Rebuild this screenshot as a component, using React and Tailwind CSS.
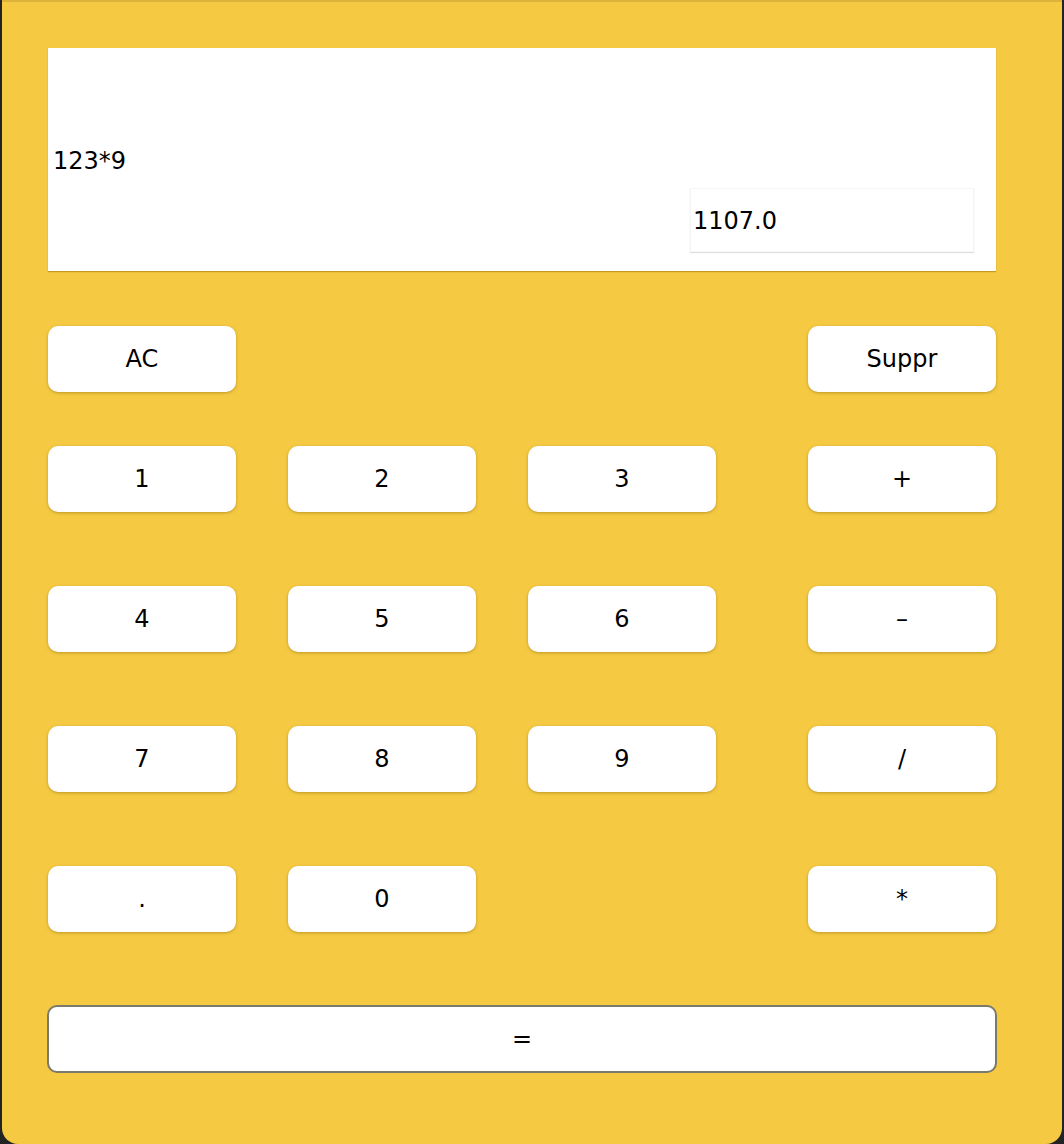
import React from "react";

const Btn = ({ children, className = "" }) => (
  <button
    className={`h-[66px] w-[188px] rounded-[10px] bg-white text-[24px] text-black shadow-[0_1px_3px_rgba(120,90,0,0.45)] flex items-center justify-center ${className}`}
    style={{ fontFamily: '"DejaVu Sans", "Noto Sans", sans-serif' }}
  >
    {children}
  </button>
);

export default function App() {
  const rows = [
    ["1", "2", "3", "+"],
    ["4", "5", "6", "–"],
    ["7", "8", "9", "/"],
    [".", "0", null, "*"],
  ];
  return (
    <div className="w-[1064px] h-[1144px] bg-[#232323] overflow-hidden" style={{ fontFamily: '"DejaVu Sans", "Noto Sans", sans-serif' }}>
      <div className="ml-[2px] w-[1060px] h-[1144px] bg-[#f5c942] border-t-2 border-[#dcb23a] rounded-b-[16px] pt-[46px] pl-[46px]">
        <div className="w-[948px] h-[223px] bg-white shadow-[0_1px_1px_rgba(170,120,0,0.6)] flex flex-col">
          <div className="h-[140px] flex items-end pl-[5px] pb-[15px] text-[24px] text-black leading-none">123*9</div>
          <div className="flex justify-end pr-[22px]">
            <div className="w-[284px] h-[64px] bg-white border border-[#f5f5f5] shadow-[0_1px_1px_rgba(0,0,0,0.12)] flex items-center pl-[2px] pt-[2px] text-[24px] text-black">
              1107.0
            </div>
          </div>
        </div>

        <div className="mt-[55px] w-[948px] flex justify-between">
          <Btn>AC</Btn>
          <Btn>Suppr</Btn>
        </div>

        <div className="mt-[54px] w-[948px] grid grid-cols-[188px_188px_188px_1fr] gap-x-[52px] gap-y-[74px]">
          {rows.map((r, i) =>
            r.map((k, j) =>
              k === null ? (
                <div key={`${i}-${j}`} />
              ) : (
                <Btn key={`${i}-${j}`} className={j === 3 ? "justify-self-end" : ""}>
                  {k}
                </Btn>
              )
            )
          )}
        </div>

        <button
          className="mt-[73px] -ml-[1px] w-[950px] h-[68px] rounded-[10px] bg-white border-2 border-[#7a7a6c] text-[24px] text-black flex items-center justify-center"
          style={{ fontFamily: '"DejaVu Sans", "Noto Sans", sans-serif' }}
        >
          =
        </button>
      </div>
    </div>
  );
}
